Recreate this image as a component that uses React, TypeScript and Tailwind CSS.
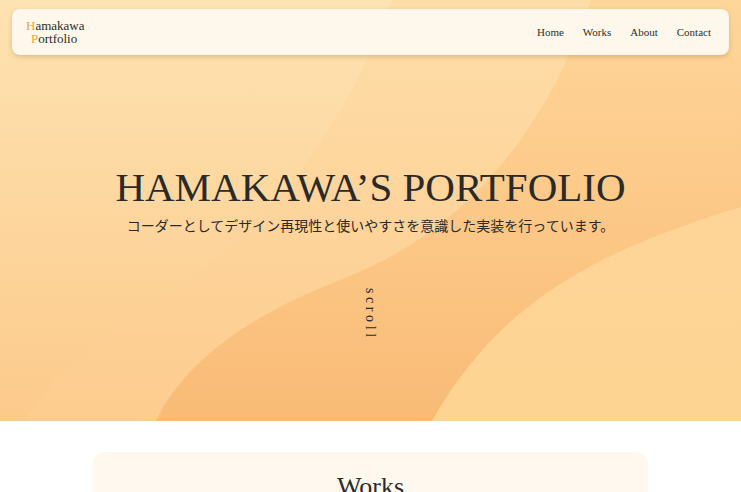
const SERIF = "font-['Liberation_Serif','Noto_Sans_CJK_JP',serif]";

function HeroWaves() {
  // 背景の波形 — 3本のカーブで帯を重ねる
  return (
    <svg
      className="absolute inset-0 h-full w-full"
      viewBox="0 0 741 421"
      preserveAspectRatio="none"
      aria-hidden
    >
      <defs>
        <linearGradient id="g0" x1="0" y1="0" x2="0" y2="1">
          <stop offset="0" stopColor="#fee3b2" />
          <stop offset="1" stopColor="#fcca8b" />
        </linearGradient>
        <linearGradient id="g1" x1="0" y1="0" x2="0" y2="1">
          <stop offset="0" stopColor="#feddA8" />
          <stop offset="1" stopColor="#fdcc8f" />
        </linearGradient>
        <linearGradient id="g2" x1="0" y1="0" x2="0" y2="1">
          <stop offset="0" stopColor="#fed69a" />
          <stop offset="0.55" stopColor="#fcc786" />
          <stop offset="1" stopColor="#f9bb76" />
        </linearGradient>
        <linearGradient id="g3" x1="0" y1="0" x2="0" y2="1">
          <stop offset="0" stopColor="#fed598" />
          <stop offset="1" stopColor="#fed492" />
        </linearGradient>
      </defs>
      <rect width="741" height="421" fill="url(#g0)" />
      <path
        d="M392 0 C 345 130 260 240 150 305 C 95 340 50 380 24 421 L741 421 L741 0 Z"
        fill="url(#g1)"
      />
      <path
        d="M591 0 C 545 130 470 230 340 280 C 250 315 185 360 156 421 L741 421 L741 0 Z"
        fill="url(#g2)"
      />
      <path
        d="M741 207 C 600 250 500 300 432 421 L741 421 Z"
        fill="url(#g3)"
      />
    </svg>
  );
}

function Header() {
  const nav = ["Home", "Works", "About", "Contact"];
  return (
    <header className="absolute left-[12px] right-[12px] top-[9px] z-10 flex h-[46px] items-center justify-between rounded-lg bg-[#fef8ec] pl-[14px] pr-[18px] shadow-[0_2px_5px_rgba(150,110,50,0.3)]">
      <div className={`${SERIF} text-[13px] leading-[13px] text-[#2b2b2b]`}>
        <div>
          <span className="text-[#e6a63a]">H</span>amakawa
        </div>
        <div className="pl-[5px]">
          <span className="text-[#e6a63a]">P</span>ortfolio
        </div>
      </div>
      <nav className="flex gap-[19px]">
        {nav.map((n) => (
          <a
            key={n}
            href="#"
            className={`${SERIF} text-[11px] text-[#2d2d2d]`}
          >
            {n}
          </a>
        ))}
      </nav>
    </header>
  );
}

export default function App() {
  return (
    <div className={`${SERIF} min-h-screen bg-white text-[#2a2a2a]`}>
      <section className="relative h-[421px] overflow-hidden">
        <HeroWaves />
        <Header />
        <div className="relative flex flex-col items-center pt-[167px]">
          <h1 className="text-[41px] leading-[41px] font-normal text-[#2a2a2a]">
            HAMAKAWA’S PORTFOLIO
          </h1>
          <p className="mt-[7px] font-['Noto_Sans_CJK_JP',sans-serif] text-[14px] leading-[20px] text-[#2a2a2a]">
            コーダーとしてデザイン再現性と使いやすさを意識した実装を行っています。
          </p>
          <span className="mt-[53px] text-[14px] leading-[15px] tracking-[3.6px] [writing-mode:vertical-rl]">
            scroll
          </span>
        </div>
      </section>

      <section className="px-[93px] pt-[31px]">
        <div className="rounded-xl bg-[#fef8ee] pt-[22px] pb-10">
          <h2 className="text-center text-[26px] leading-[26px] font-normal">
            Works
          </h2>
        </div>
      </section>
    </div>
  );
}
